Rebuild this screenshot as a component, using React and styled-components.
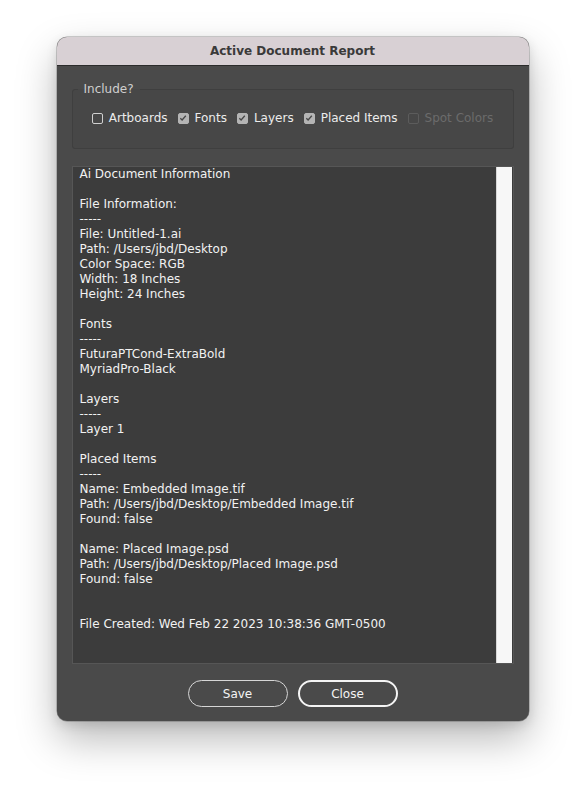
import React, { useState } from 'react'
import styled, { createGlobalStyle } from 'styled-components'

const GlobalStyle = createGlobalStyle`
  html, body {
    margin: 0;
    padding: 0;
    background: #ffffff;
  }
  body {
    font-family: "DejaVu Sans", Verdana, sans-serif;
  }
`

const Page = styled.div`
  width: 585px;
  height: 796px;
  padding-top: 37px;
  box-sizing: border-box;
  display: flex;
  justify-content: center;
  align-items: flex-start;
`

const Window = styled.div`
  width: 472px;
  height: 684px;
  border-radius: 10px;
  overflow: hidden;
  display: flex;
  flex-direction: column;
  background: #4a4a4a;
  box-shadow: 0 0 0 0.5px rgba(0, 0, 0, 0.35), 0 18px 40px rgba(0, 0, 0, 0.28),
    0 4px 12px rgba(0, 0, 0, 0.12);
`

const TitleBar = styled.div`
  height: 28px;
  flex: none;
  display: flex;
  align-items: center;
  justify-content: center;
  background: #d8d0d4;
  border-bottom: 1px solid #2c2c2c;
  font-size: 12px;
  font-weight: bold;
  color: #3a3a3a;
`

const Body = styled.div`
  flex: 1;
  display: flex;
  flex-direction: column;
  padding: 16px 15px 14px 15px;
`

const Group = styled.fieldset`
  margin: 0;
  padding: 0;
  height: 67px;
  box-sizing: border-box;
  border: 1px solid #3f3f3f;
  border-radius: 3px;
  background: #474747;
  display: flex;
  justify-content: center;
`

const Legend = styled.legend`
  margin-left: 5px;
  padding: 0 6px;
  font-size: 12px;
  color: #cfcfcf;
`

const OptionRow = styled.div`
  display: flex;
  align-items: center;
  gap: 10px;
  margin-top: 14px;
  height: 16px;
`

const Option = styled.label`
  display: flex;
  align-items: center;
  gap: 6px;
  font-size: 12px;
  color: ${({ disabled }) => (disabled ? '#6b6b6b' : '#ececec')};
`

const Box = styled.span`
  width: 11px;
  height: 11px;
  border-radius: 2px;
  display: inline-flex;
  align-items: center;
  justify-content: center;
  box-sizing: border-box;
  border: 1px solid ${({ checked, disabled }) =>
    disabled ? '#5c5c5c' : checked ? '#b4b4b4' : '#d0d0d0'};
  background: ${({ checked }) => (checked ? '#b4b4b4' : 'transparent')};
`

const Report = styled.div`
  margin-top: 17px;
  height: 498px;
  display: flex;
  border: 1px solid #565656;
  background: #3c3c3c;
  box-sizing: border-box;
`

const ReportText = styled.pre`
  flex: 1;
  margin: 0;
  padding: 0 0 0 7px;
  font-family: "DejaVu Sans", Verdana, sans-serif;
  font-size: 12px;
  line-height: 15px;
  color: #f2f2f2;
  white-space: pre;
  overflow: hidden;
`

const Track = styled.div`
  width: 15px;
  flex: none;
  margin-right: 1px;
  background: #f7f7f7;
  border-left: 1px solid #d8d8d8;
`

const Buttons = styled.div`
  margin-top: 16px;
  display: flex;
  justify-content: center;
  gap: 10px;
`

const Button = styled.button`
  width: 100px;
  height: 27px;
  border-radius: 14px;
  box-sizing: border-box;
  background: transparent;
  border: ${({ primary }) => (primary ? '2px solid #f4f4f4' : '1px solid #d6d6d6')};
  color: #f4f4f4;
  font-family: "DejaVu Sans", Verdana, sans-serif;
  font-size: 12px;
  padding: 0;
`

const Check = () => (
  <svg width="8" height="8" viewBox="0 0 8 8">
    <path d="M1.3 4.2 L3.1 6 L6.8 1.8" fill="none" stroke="#474747" strokeWidth="1.3" />
  </svg>
)

const report = `Ai Document Information

File Information:
-----
File: Untitled-1.ai
Path: /Users/jbd/Desktop
Color Space: RGB
Width: 18 Inches
Height: 24 Inches

Fonts
-----
FuturaPTCond-ExtraBold
MyriadPro-Black

Layers
-----
Layer 1

Placed Items
-----
Name: Embedded Image.tif
Path: /Users/jbd/Desktop/Embedded Image.tif
Found: false

Name: Placed Image.psd
Path: /Users/jbd/Desktop/Placed Image.psd
Found: false


File Created: Wed Feb 22 2023 10:38:36 GMT-0500`

const options = [
  { name: 'Artboards', checked: false },
  { name: 'Fonts', checked: true },
  { name: 'Layers', checked: true },
  { name: 'Placed Items', checked: true },
  { name: 'Spot Colors', checked: false, disabled: true },
]

export default function App() {
  const [opts] = useState(options)
  return (
    <>
      <GlobalStyle />
      <Page>
        <Window>
          <TitleBar>Active Document Report</TitleBar>
          <Body>
            <Group>
              <Legend>Include?</Legend>
              <OptionRow>
                {opts.map(o => (
                  <Option key={o.name} disabled={o.disabled}>
                    <Box checked={o.checked} disabled={o.disabled}>
                      {o.checked && <Check />}
                    </Box>
                    {o.name}
                  </Option>
                ))}
              </OptionRow>
            </Group>
            <Report>
              <ReportText>{report}</ReportText>
              <Track />
            </Report>
            <Buttons>
              <Button>Save</Button>
              <Button primary>Close</Button>
            </Buttons>
          </Body>
        </Window>
      </Page>
    </>
  )
}
